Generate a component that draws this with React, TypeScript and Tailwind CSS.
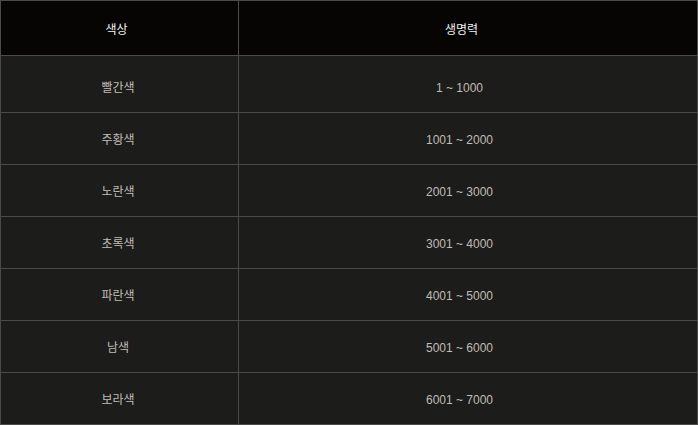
const rows = [
  { color: '빨간색', hp: '1 ~ 1000' },
  { color: '주황색', hp: '1001 ~ 2000' },
  { color: '노란색', hp: '2001 ~ 3000' },
  { color: '초록색', hp: '3001 ~ 4000' },
  { color: '파란색', hp: '4001 ~ 5000' },
  { color: '남색', hp: '5001 ~ 6000' },
  { color: '보라색', hp: '6001 ~ 7000' },
];

const font = {
  fontFamily: '"Liberation Sans", "Noto Sans CJK KR", sans-serif',
};

export default function App() {
  return (
    <div className="w-[698px] h-[425px] bg-[#1c1c1b]" style={font}>
      <div className="border border-[#4b4b49] text-[12px]">
        {/* header */}
        <div className="flex h-[54px] bg-[#060504] text-[#f2f2f2]">
          <div className="flex w-[238px] items-center justify-center border-r border-[#4b4b49] pt-[3px] pr-[6px]">
            색상
          </div>
          <div className="flex flex-1 items-center justify-center pt-[3px] pr-[13px]">
            생명력
          </div>
        </div>

        {rows.map((r, i) => (
          <div
            key={r.color}
            className={
              i === 0
                ? 'flex h-[57px] border-t border-[#4b4b49] text-[#c0bcb4]'
                : 'flex h-[52px] border-t border-[#4b4b49] text-[#c0bcb4]'
            }
          >
            <div
              className={
                i === 0
                  ? 'flex w-[238px] items-center justify-center border-r border-[#4b4b49] pt-[8px] pr-[3px]'
                  : 'flex w-[238px] items-center justify-center border-r border-[#4b4b49] pt-[3px] pr-[3px]'
              }
            >
              {r.color}
            </div>
            <div
              className={
                i === 0
                  ? 'flex flex-1 items-center justify-center pt-[8px] pr-[17px]'
                  : 'flex flex-1 items-center justify-center pt-[3px] pr-[17px]'
              }
            >
              {r.hp}
            </div>
          </div>
        ))}
      </div>
    </div>
  );
}
